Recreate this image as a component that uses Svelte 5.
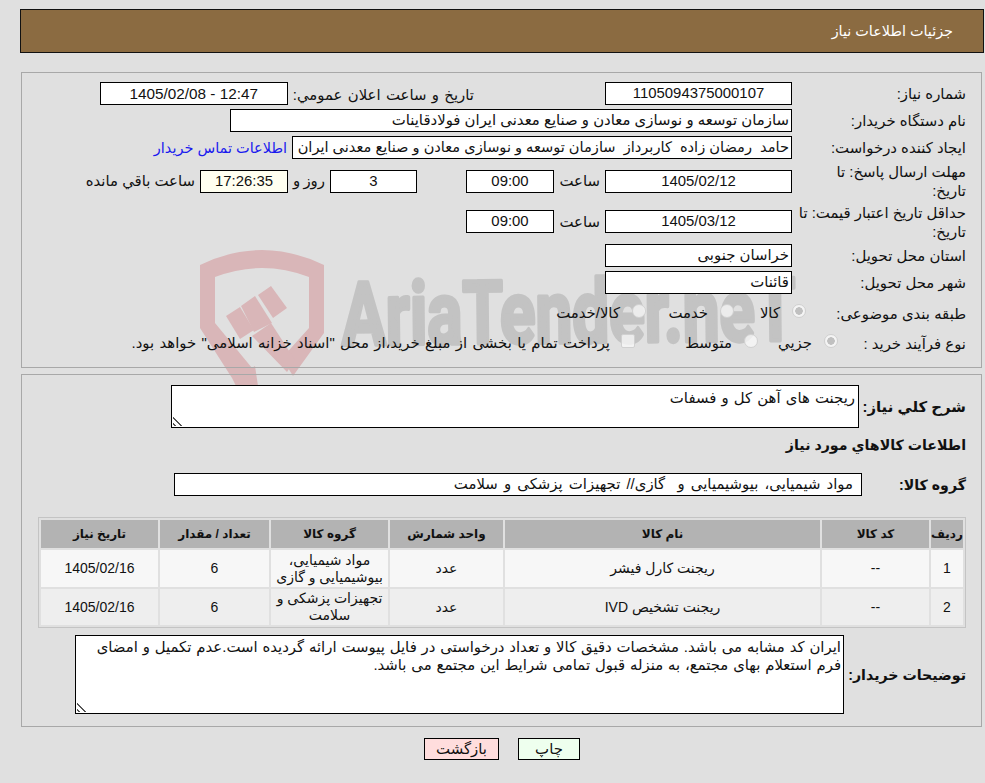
<script>
  const rows = [
    { id: 1, code: '--', name: 'ریجنت کارل فیشر', unit: 'عدد', group: 'مواد شیمیایی، بیوشیمیایی و گازی', qty: 6, date: '1405/02/16' },
    { id: 2, code: '--', name: 'ریجنت تشخیص IVD', unit: 'عدد', group: 'تجهیزات پزشکی و سلامت', qty: 6, date: '1405/02/16' }
  ];
</script>

<div class="page" dir="rtl">
  <svg class="mark" viewBox="0 0 985 783" aria-hidden="true">
    <g fill="#d9b6b8">
      <path d="M200 265 Q262 235 324 265 V333 L293 376 L282 358 L309 328 V277 Q262 259 215 277 V323 L252 368 L255 366 L258 386 L236 386 L232 378 L200 328Z" />
      <path d="M252 336 L271 323 L295 360 L287 372Z" />
      <path d="M226 316 L240 307 L254 330 L240 339Z" />
      <path d="M241 306 L255 296 L272 323 L254 332Z" />
      <path d="M258 295 L271 286 L287 308 L273 318Z" />
    </g>
    <text class="wm-text" x="342" y="345" textLength="454" lengthAdjust="spacingAndGlyphs" transform="rotate(-0.6 342 345)">AriaTender.neT</text>
  </svg>

  <div class="title">جزئیات اطلاعات نیاز</div>

  <div class="panel first">
    <div class="row r1">
      <span class="label">شماره نیاز:</span>
      <div class="box mid center">1105094375000107</div>
      <span class="label2">تاریخ و ساعت اعلان عمومي:</span>
      <div class="box announce center" dir="ltr">1405/02/08 - 12:47</div>
    </div>
    <div class="row r2">
      <span class="label">نام دستگاه خریدار:</span>
      <div class="box wide">سازمان توسعه و نوسازی معادن و صنایع معدنی ایران فولادقاینات</div>
    </div>
    <div class="row r2">
      <span class="label">ایجاد کننده درخواست:</span>
      <div class="box creator">حامد&nbsp; رمضان زاده&nbsp; کاربرداز&nbsp; سازمان توسعه و نوسازی معادن و صنایع معدنی ایران</div>
      <span class="link">اطلاعات تماس خریدار</span>
    </div>
    <div class="row r3">
      <span class="label">مهلت ارسال پاسخ: تا<br />تاریخ:</span>
      <div class="box mid center">1405/02/12</div>
      <span class="hour">ساعت</span>
      <div class="box time center">09:00</div>
      <div class="box days center">3</div>
      <span class="day">روز و</span>
      <div class="box count center">17:26:35</div>
      <span class="left">ساعت باقي مانده</span>
    </div>
    <div class="row r3 taller">
      <span class="label">حداقل تاریخ اعتبار قیمت: تا<br />تاریخ:</span>
      <div class="box mid center">1405/03/12</div>
      <span class="hour">ساعت</span>
      <div class="box time center">09:00</div>
    </div>
    <div class="row r2">
      <span class="label">استان محل تحویل:</span>
      <div class="box mid">خراسان جنوبی</div>
    </div>
    <div class="row r2">
      <span class="label">شهر محل تحویل:</span>
      <div class="box mid">قائنات</div>
    </div>
    <div class="row r4 top-gap">
      <span class="label">طبقه بندی موضوعی:</span>
      <div class="opts">
        <span class="opt o1"><i class="radio on"></i>کالا</span>
        <span class="opt o2"><i class="radio"></i>خدمت</span>
        <span class="opt"><i class="radio"></i>کالا/خدمت</span>
      </div>
    </div>
    <div class="row r4">
      <span class="label">نوع فرآیند خرید :</span>
      <div class="opts">
        <span class="opt o3"><i class="radio on"></i>جزیي</span>
        <span class="opt o4"><i class="radio"></i>متوسط</span>
        <span class="opt pay"><i class="check"></i>پرداخت تمام یا بخشی از مبلغ خرید،از محل "اسناد خزانه اسلامی" خواهد بود.</span>
      </div>
    </div>
  </div>

  <div class="panel second">
    <div class="row desc">
      <span class="label bold">شرح كلي نیاز:</span>
      <div class="box area">ریجنت های آهن کل و فسفات<i class="grip"></i></div>
    </div>
    <div class="head bold">اطلاعات کالاهاي مورد نیاز</div>
    <div class="row grp">
      <span class="label bold">گروه کالا:</span>
      <div class="box group">مواد شیمیایی، بیوشیمیایی و&nbsp; گازی// تجهیزات پزشکی و سلامت</div>
    </div>

    <table>
      <thead>
        <tr>
          <th class="c1">ردیف</th>
          <th class="c2">کد کالا</th>
          <th class="c3">نام کالا</th>
          <th class="c4">واحد شمارش</th>
          <th class="c5">گروه کالا</th>
          <th class="c6">تعداد / مقدار</th>
          <th class="c7">تاریخ نیاز</th>
        </tr>
      </thead>
      <tbody>
        {#each rows as r}
          <tr>
            <td>{r.id}</td>
            <td>{r.code}</td>
            <td>{r.name}</td>
            <td>{r.unit}</td>
            <td>{r.group}</td>
            <td>{r.qty}</td>
            <td>{r.date}</td>
          </tr>
        {/each}
      </tbody>
    </table>

    <div class="row notes">
      <span class="label bold">توضیحات خریدار:</span>
      <div class="box note">ایران کد مشابه می باشد. مشخصات دقیق کالا و تعداد درخواستی در فایل پیوست ارائه گردیده است.عدم تکمیل و امضای فرم استعلام بهای مجتمع، به منزله قبول تمامی شرایط این مجتمع می باشد.<i class="grip"></i></div>
    </div>
  </div>

  <div class="buttons">
    <button class="print">چاپ</button>
    <button class="back">بازگشت</button>
  </div>
</div>

<style>
  :global(body) {
    margin: 0;
    background: #e0e0e0;
  }

  .page {
    position: relative;
    width: 985px;
    height: 783px;
    box-sizing: border-box;
    padding: 9px 1px 0 20px;
    font-family: "Liberation Sans", "DejaVu Sans", sans-serif;
    font-size: 14.9px;
    color: #111;
    overflow: hidden;
  }

  .mark {
    position: absolute;
    left: 0;
    top: 0;
    width: 985px;
    height: 783px;
    z-index: -1;
  }

  .wm-text {
    direction: ltr;
    font-family: "Roboto", sans-serif;
    font-size: 88px;
    font-weight: 700;
    fill: #c3c3c3;
    stroke: #c3c3c3;
    stroke-width: 4px;
    stroke-linejoin: round;
  }

  .title {
    height: 44px;
    box-sizing: border-box;
    background: #8b6b41;
    border: 1px solid #111;
    color: #fff;
    padding: 13px 30px 0 0;
    font-size: 14.4px;
  }

  .panel {
    position: relative;
    margin: 0 2px 0 1px;
    border: 1px solid #a8a8a8;
    box-sizing: border-box;
  }

  .first {
    height: 296px;
    margin-top: 19px;
    padding-top: 7px;
  }

  .second {
    height: 353px;
    margin-top: 6px;
    padding-top: 10px;
  }

  .row {
    display: flex;
    align-items: center;
  }

  .r1, .r2 {
    height: 27px;
  }

  .r3 {
    height: 40px;
  }

  .taller {
    height: 41px;
  }

  .r4 {
    height: 30px;
  }

  .top-gap {
    margin-top: 2px;
  }

  .label {
    width: 172px;
    padding: 2px 15px 0 0;
    margin-left: 2px;
    flex: none;
    line-height: 19px;
  }

  .box {
    position: relative;
    box-sizing: border-box;
    height: 23px;
    line-height: 21px;
    border: 1px solid #000;
    background: #fff;
    padding: 0 2px;
    flex: none;
    white-space: nowrap;
    overflow: hidden;
  }

  .center {
    text-align: center;
  }

  .mid {
    width: 187px;
  }

  .wide {
    width: 562px;
  }

  .creator {
    width: 500px;
    font-size: 14.6px;
  }

  .announce {
    width: 188px;
    font-size: 15.3px;
  }

  .label2 {
    margin: 2px 131px 0 5px;
    white-space: nowrap;
    word-spacing: 1.2px;
  }

  .link {
    color: #1a1aee;
    margin-right: 5px;
    white-space: nowrap;
    font-size: 14.5px;
  }

  .hour {
    flex: none;
    width: 46px;
    margin-right: 5px;
    white-space: nowrap;
  }

  .time {
    width: 88px;
  }

  .days {
    width: 87px;
    margin-right: 49px;
  }

  .day {
    flex: none;
    width: 37px;
    margin-right: 5px;
    white-space: nowrap;
    word-spacing: -1px;
  }

  .count {
    width: 88px;
    background: #fffff0;
  }

  .left {
    margin-right: 5px;
    white-space: nowrap;
  }

  .opts {
    display: flex;
    align-items: center;
    margin-right: -14px;
  }

  .opt {
    display: inline-flex;
    align-items: center;
    white-space: nowrap;
  }

  .pay {
    word-spacing: 1.2px;
  }

  .o1 { width: 72px; }
  .o2 { width: 88px; }
  .o3 { width: 80px; margin-right: -32px; }
  .o4 { width: 123px; }

  .radio {
    width: 14px;
    height: 14px;
    margin: -4px 0 0 12px;
    border-radius: 50%;
    border: 1px solid #d0d0d0;
    background: rgba(250, 250, 250, 0.75);
    box-sizing: border-box;
    flex: none;
  }

  .radio.on {
    background: radial-gradient(circle, #c0c0c0 0 3.5px, #f4f4f4 4px);
  }

  .check {
    width: 14px;
    height: 14px;
    margin: -4px 0 0 11px;
    border: 1px solid #d0d0d0;
    border-radius: 2px;
    background: rgba(250, 250, 250, 0.75);
    box-sizing: border-box;
    flex: none;
  }

  .bold {
    font-weight: 700;
    font-size: 14.2px;
  }

  .desc {
    height: 43px;
  }

  .desc .label, .grp .label, .notes .label {
    width: 105px;
    margin-left: 2px;
  }

  .desc .label {
    font-size: 14.9px;
  }

  .area {
    width: 688px;
    height: 43px;
    padding: 2px 3px 0;
    word-spacing: 1px;
  }

  .grip {
    position: absolute;
    left: 1px;
    bottom: 1px;
    width: 10px;
    height: 10px;
    background: repeating-linear-gradient(45deg, transparent 0 1px, #555 1px 2.4px, transparent 2.4px 4px);
    clip-path: polygon(0 0, 100% 100%, 0 100%);
  }

  .head {
    padding: 4px 15px 0 0;
    height: 34px;
    box-sizing: border-box;
    margin-top: 3px;
    line-height: 21px;
  }

  .grp {
    height: 23px;
    margin-top: 8px;
  }

  .group {
    width: 688px;
    padding: 0 8px;
    margin-right: -3px;
    word-spacing: 2px;
  }

  table {
    margin: 21px 15px 0 0;
    width: 928px;
    border-collapse: separate;
    border-spacing: 2px;
    border: 1px solid #c4c4c4;
    table-layout: fixed;
  }

  th {
    background: #b3b3b3;
    height: 28px;
    padding: 0;
    font-size: 12px;
    font-weight: 700;
  }

  td {
    background: #f7f7f7;
    height: 37px;
    padding: 0;
    text-align: center;
    line-height: 17px;
    font-size: 14px;
  }

  tbody tr:nth-child(2) td {
    background: #eeeeee;
    height: 36px;
  }

  .c1 { width: 32px; }
  .c2 { width: 107px; }
  .c3 { width: 315px; }
  .c4 { width: 113px; }
  .c5 { width: 117px; }
  .c6 { width: 109px; }
  .c7 { width: 117px; }

  .notes {
    height: 79px;
    margin-top: 7px;
  }

  .notes .label {
    white-space: nowrap;
    width: 120px;
  }

  .note {
    width: 769px;
    height: 79px;
    white-space: normal;
    line-height: 18px;
    padding: 2px 2px 2px 14px;
    word-spacing: 0.7px;
  }

  .buttons {
    display: flex;
    gap: 19px;
    padding: 11px 404px 0 0;
  }

  button {
    font: inherit;
    color: #111;
    height: 22px;
    padding: 0;
    border: 1px solid #000;
    border-radius: 0;
  }

  .print {
    width: 62px;
    background: #eeffee;
  }

  .back {
    width: 75px;
    background: #ffdddd;
  }
</style>
